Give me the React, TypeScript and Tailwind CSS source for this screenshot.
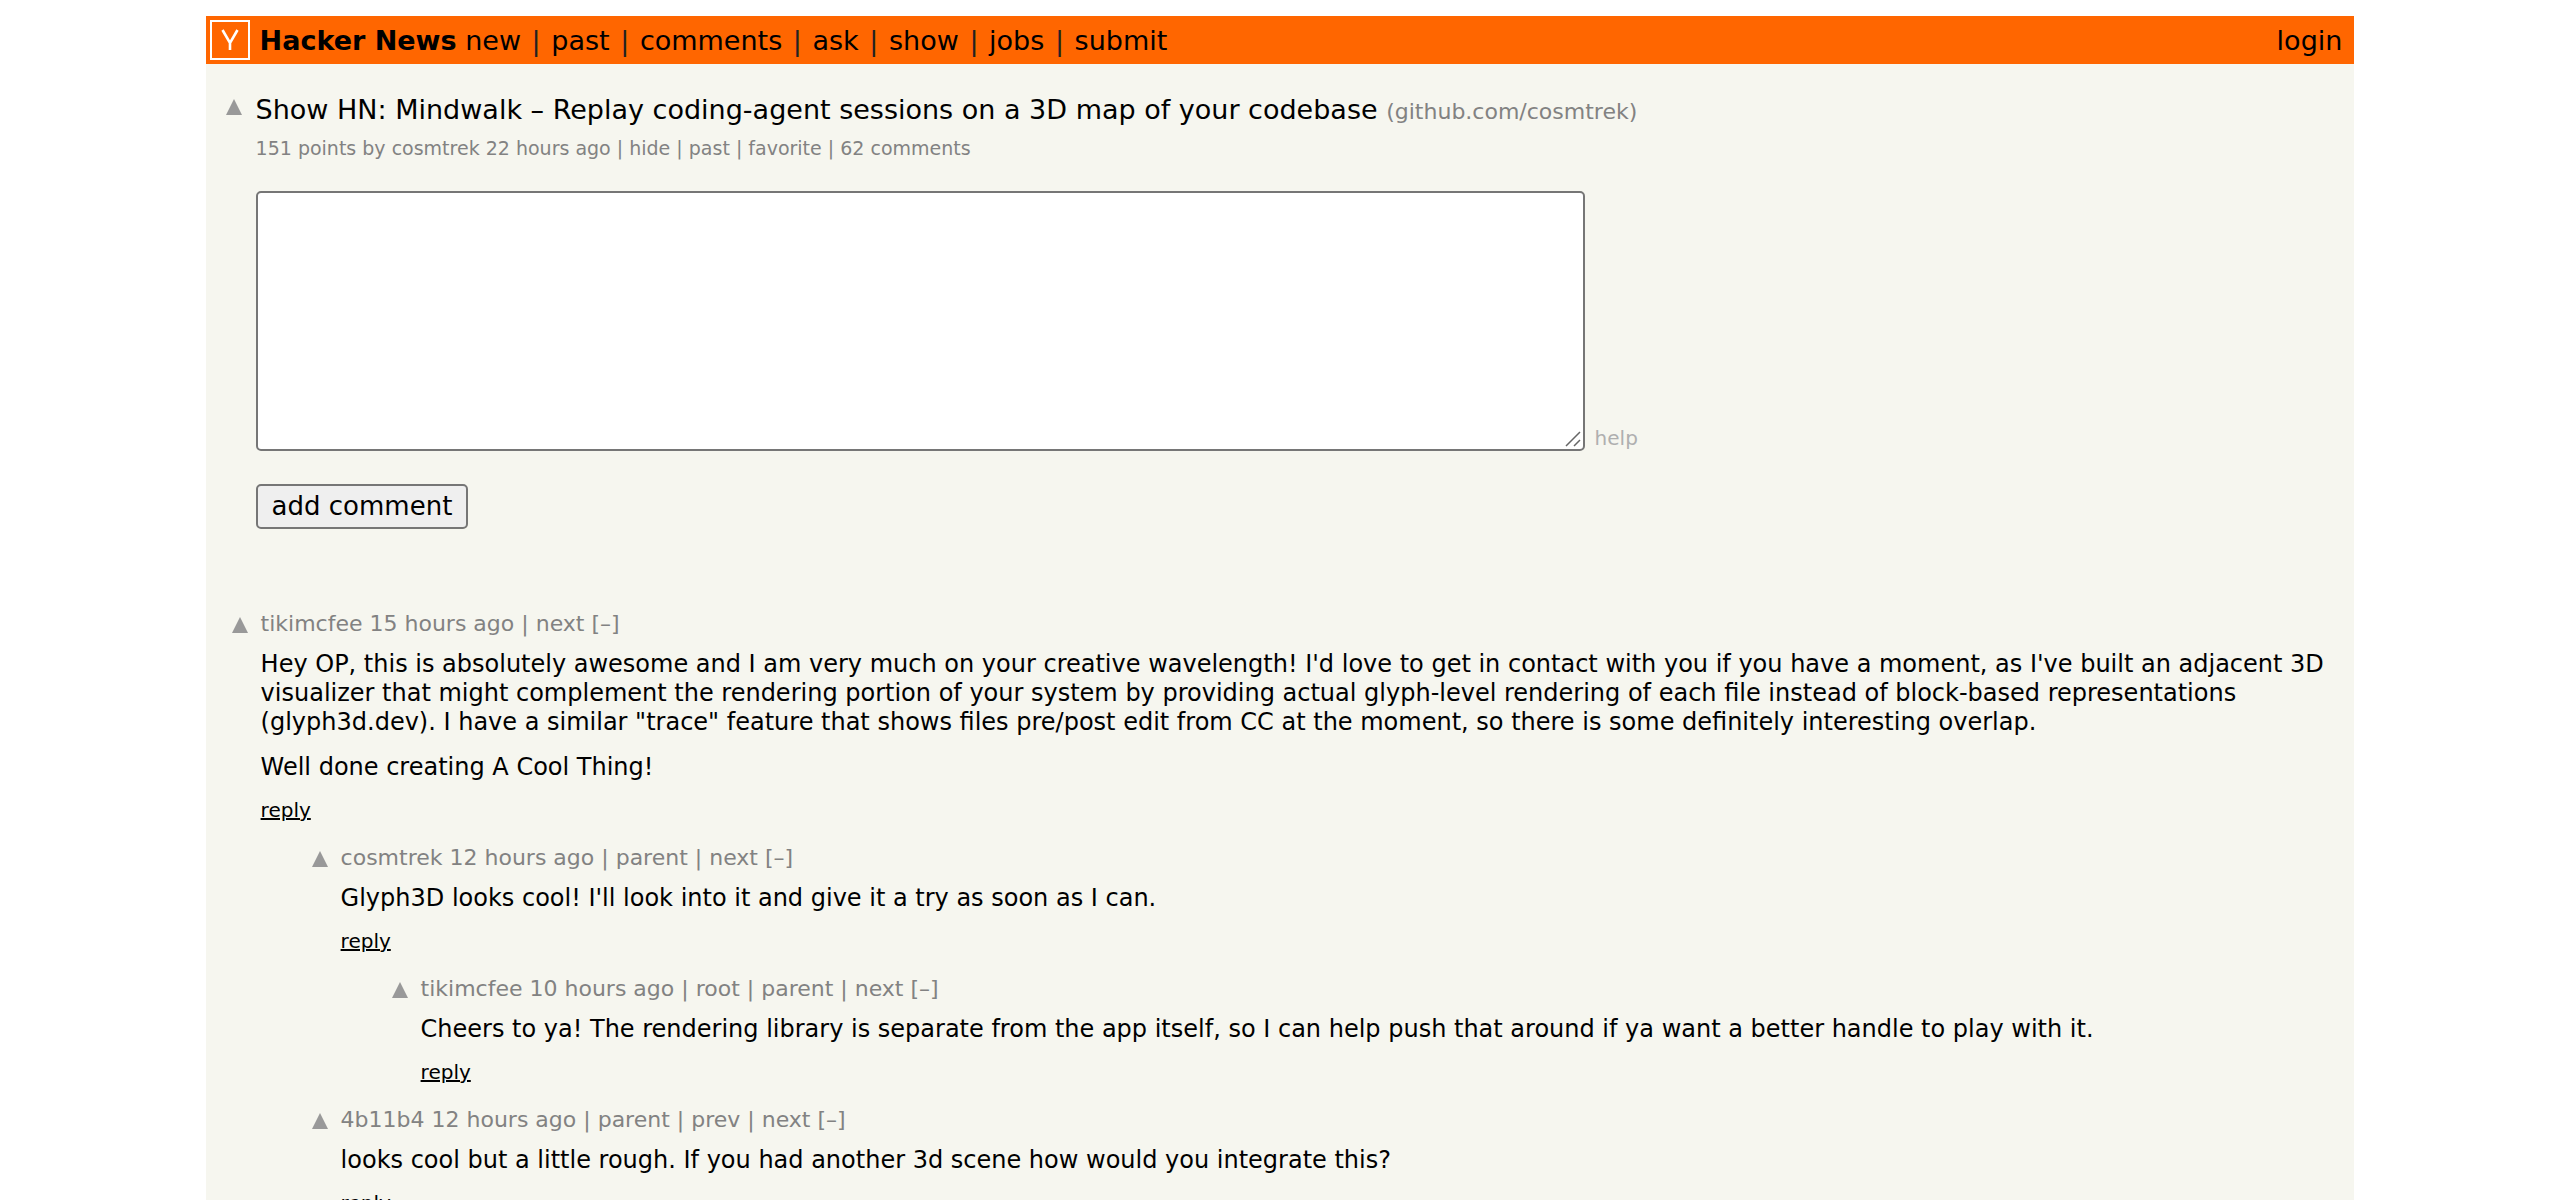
import { Fragment } from 'react';

type Comment = {
    id: number;
    user: string;
    age: string;
    links: string[];
    text: string[];
    replies?: Comment[];
};

const navLinks = ['new', 'past', 'comments', 'ask', 'show', 'jobs', 'submit'];

const comments: Comment[] = [
    {
        id: 1,
        user: 'tikimcfee',
        age: '15 hours ago',
        links: ['next'],
        text: [
            "Hey OP, this is absolutely awesome and I am very much on your creative wavelength! I'd love to get in contact with you if you have a moment, as I've built an adjacent 3D visualizer that might complement the rendering portion of your system by providing actual glyph-level rendering of each file instead of block-based representations (glyph3d.dev). I have a similar \"trace\" feature that shows files pre/post edit from CC at the moment, so there is some definitely interesting overlap.",
            'Well done creating A Cool Thing!',
        ],
        replies: [
            {
                id: 2,
                user: 'cosmtrek',
                age: '12 hours ago',
                links: ['parent', 'next'],
                text: ["Glyph3D looks cool! I'll look into it and give it a try as soon as I can."],
                replies: [
                    {
                        id: 3,
                        user: 'tikimcfee',
                        age: '10 hours ago',
                        links: ['root', 'parent', 'next'],
                        text: [
                            'Cheers to ya! The rendering library is separate from the app itself, so I can help push that around if ya want a better handle to play with it.',
                        ],
                    },
                ],
            },
            {
                id: 4,
                user: '4b11b4',
                age: '12 hours ago',
                links: ['parent', 'prev', 'next'],
                text: ['looks cool but a little rough. If you had another 3d scene how would you integrate this?'],
            },
        ],
    },
];

function VoteArrow() {
    return (
        <button type="button" aria-label="upvote" className="mt-[5px] block h-4 w-4 shrink-0">
            <svg viewBox="0 0 16 16" className="h-4 w-4" fill="#999999">
                <path d="M8 0 L16 16 H0 Z" />
            </svg>
        </button>
    );
}

function Header() {
    return (
        <header className="flex h-12 items-center bg-[#ff6600] pl-1 pr-3 text-[27px] leading-8">
            <a
                href="#"
                aria-label="Home"
                className="flex h-10 w-10 shrink-0 items-center justify-center border-2 border-white text-white"
            >
                <svg viewBox="0 0 36 36" className="h-9 w-9" fill="none" stroke="currentColor" strokeWidth="2.6">
                    <path d="M10.5 8 L18 21 L25.5 8 M18 20 V28" />
                </svg>
            </a>
            <nav className="ml-2.5 grow pt-0.5">
                <a href="#" className="font-bold">
                    Hacker News
                </a>{' '}
                {navLinks.map((link, index) => (
                    <Fragment key={link}>
                        {index > 0 && <span className="mx-0.5 text-[#222222]"> | </span>}
                        <a href="#">{link}</a>
                    </Fragment>
                ))}
            </nav>
            <a href="#" className="pt-0.5">
                login
            </a>
        </header>
    );
}

function Story() {
    return (
        <section className="flex gap-3.5 pl-5 pt-[30px]">
            <VoteArrow />
            <div className="grow">
                <h1 className="text-[27px] leading-8">
                    <a href="#">Show HN: Mindwalk – Replay coding-agent sessions on a 3D map of your codebase</a>{' '}
                    <span className="text-[22px] leading-none text-[#828282]">
                        (<a href="#">github.com/cosmtrek</a>)
                    </span>
                </h1>
                <p className="mt-2.5 text-[19px] leading-6 text-[#828282]">
                    151 points by <a href="#">cosmtrek</a> <a href="#">22 hours ago</a> | <a href="#">hide</a> |{' '}
                    <a href="#">past</a> | <a href="#">favorite</a> | <a href="#">62 comments</a>
                </p>
                <form className="mt-[31px]">
                    <div className="flex items-end gap-2.5">
                        <div className="relative">
                            <textarea
                                aria-label="Comment"
                                rows={8}
                                className="block h-[260px] w-[1329px] resize-none rounded-[5px] border-2 border-[#767676] bg-white p-1"
                            />
                            <svg
                                viewBox="0 0 16 16"
                                className="pointer-events-none absolute bottom-1 right-1 h-4 w-4"
                                stroke="#666666"
                                strokeWidth="1.5"
                            >
                                <path d="M1 15 L15 1 M9 15 L15 9" />
                            </svg>
                        </div>
                        <a href="#" className="pb-px text-[20px] leading-6 text-[#afafaf]">
                            help
                        </a>
                    </div>
                    <button
                        type="button"
                        className="mt-[33px] block rounded-[5px] border-2 border-[#767676] bg-[#efefef] px-3.5 py-1 text-[26px] leading-[33px]"
                    >
                        add comment
                    </button>
                </form>
            </div>
        </section>
    );
}

function CommentItem({ comment }: { comment: Comment }) {
    return (
        <li>
            <article className="flex gap-[13px] pb-6">
                <VoteArrow />
                <div className="grow">
                    <div className="text-[22px] leading-6 text-[#828282]">
                        <a href="#">{comment.user}</a> <a href="#">{comment.age}</a>
                        {comment.links.map((link) => (
                            <Fragment key={link}>
                                {' | '}
                                <a href="#">{link}</a>
                            </Fragment>
                        ))}{' '}
                        <button type="button">[–]</button>
                    </div>
                    <div className="mt-3.5 space-y-4 text-[24px] leading-[29px]">
                        {comment.text.map((paragraph) => (
                            <p key={paragraph}>{paragraph}</p>
                        ))}
                    </div>
                    <div className="mt-4 text-[20px] leading-6">
                        <a href="#" className="underline">
                            reply
                        </a>
                    </div>
                </div>
            </article>
            {comment.replies && (
                <ul className="pl-20">
                    {comment.replies.map((reply) => (
                        <CommentItem key={reply.id} comment={reply} />
                    ))}
                </ul>
            )}
        </li>
    );
}

export default function App() {
    return (
        <div className="h-screen overflow-y-auto bg-white px-4 pt-4 font-['Verdana','DejaVu_Sans',sans-serif] text-black [scrollbar-width:none]">
            <div className="mx-auto w-[85%] bg-[#f6f6ef]">
                <Header />
                <main>
                    <Story />
                    <ul className="mt-[83px] pl-[26px] pr-1">
                        {comments.map((comment) => (
                            <CommentItem key={comment.id} comment={comment} />
                        ))}
                    </ul>
                </main>
            </div>
        </div>
    );
}
